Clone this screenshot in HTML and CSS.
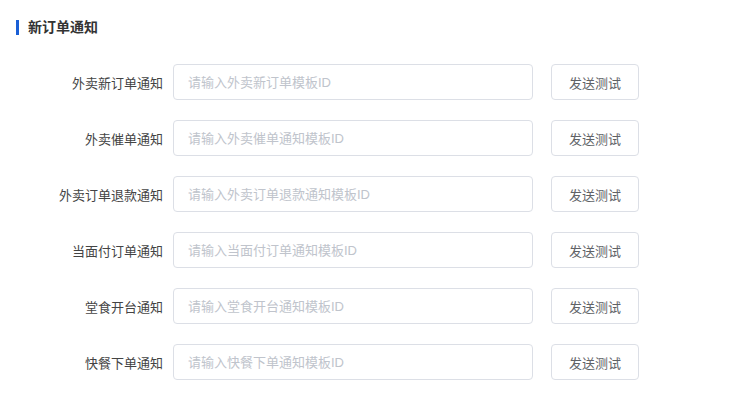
FILE: index.html
```html
<!DOCTYPE html>
<html lang="zh-CN">
<head>
  <meta charset="UTF-8">
  <title>新订单通知</title>
  <link rel="stylesheet" href="styles.css">
</head>
<body>
  <div class="section">
    <h3 class="section-title">新订单通知</h3>

    <div class="form">
      <div class="form-item">
        <label class="form-label">外卖新订单通知</label>
        <input class="form-input" type="text" placeholder="请输入外卖新订单模板ID">
        <button class="test-btn">发送测试</button>
      </div>
      <div class="form-item">
        <label class="form-label">外卖催单通知</label>
        <input class="form-input" type="text" placeholder="请输入外卖催单通知模板ID">
        <button class="test-btn">发送测试</button>
      </div>
      <div class="form-item">
        <label class="form-label">外卖订单退款通知</label>
        <input class="form-input" type="text" placeholder="请输入外卖订单退款通知模板ID">
        <button class="test-btn">发送测试</button>
      </div>
      <div class="form-item">
        <label class="form-label">当面付订单通知</label>
        <input class="form-input" type="text" placeholder="请输入当面付订单通知模板ID">
        <button class="test-btn">发送测试</button>
      </div>
      <div class="form-item">
        <label class="form-label">堂食开台通知</label>
        <input class="form-input" type="text" placeholder="请输入堂食开台通知模板ID">
        <button class="test-btn">发送测试</button>
      </div>
      <div class="form-item">
        <label class="form-label">快餐下单通知</label>
        <input class="form-input" type="text" placeholder="请输入快餐下单通知模板ID">
        <button class="test-btn">发送测试</button>
      </div>
    </div>
  </div>
</body>
</html>
```

FILE: styles.css
```css
body {
  margin: 0;
  background: #fff;
  color: #333;
  font-family: "Helvetica Neue", "Liberation Sans", "Noto Sans CJK SC", sans-serif;
}

.section {
  padding: 18px 16px 0;
}

.section-title {
  margin: 0;
  padding-left: 9px;
  border-left: 3px solid #1a5fd6;
  font-size: 14px;
  font-weight: bold;
  line-height: 15px;
  height: 15px;
  margin-top: 2px;
  color: #333;
}

.form {
  margin-top: 29px;
}

.form-item {
  display: flex;
  align-items: center;
  height: 36px;
  margin-bottom: 20px;
}

.form-label {
  width: 147px;
  padding-right: 10px;
  text-align: right;
  font-size: 13px;
  color: #444;
}

.form-input {
  box-sizing: border-box;
  width: 360px;
  height: 36px;
  padding: 0 14px;
  border: 1px solid #dcdfe6;
  border-radius: 4px;
  font-family: inherit;
  font-size: 13px;
  color: #606266;
  outline: none;
}

.form-input::placeholder {
  color: #c0c4cc;
}

.test-btn {
  box-sizing: border-box;
  width: 88px;
  height: 36px;
  margin-left: 18px;
  border: 1px solid #dcdfe6;
  border-radius: 4px;
  background: #fff;
  font-family: inherit;
  font-size: 13px;
  color: #606266;
  cursor: pointer;
}
```
